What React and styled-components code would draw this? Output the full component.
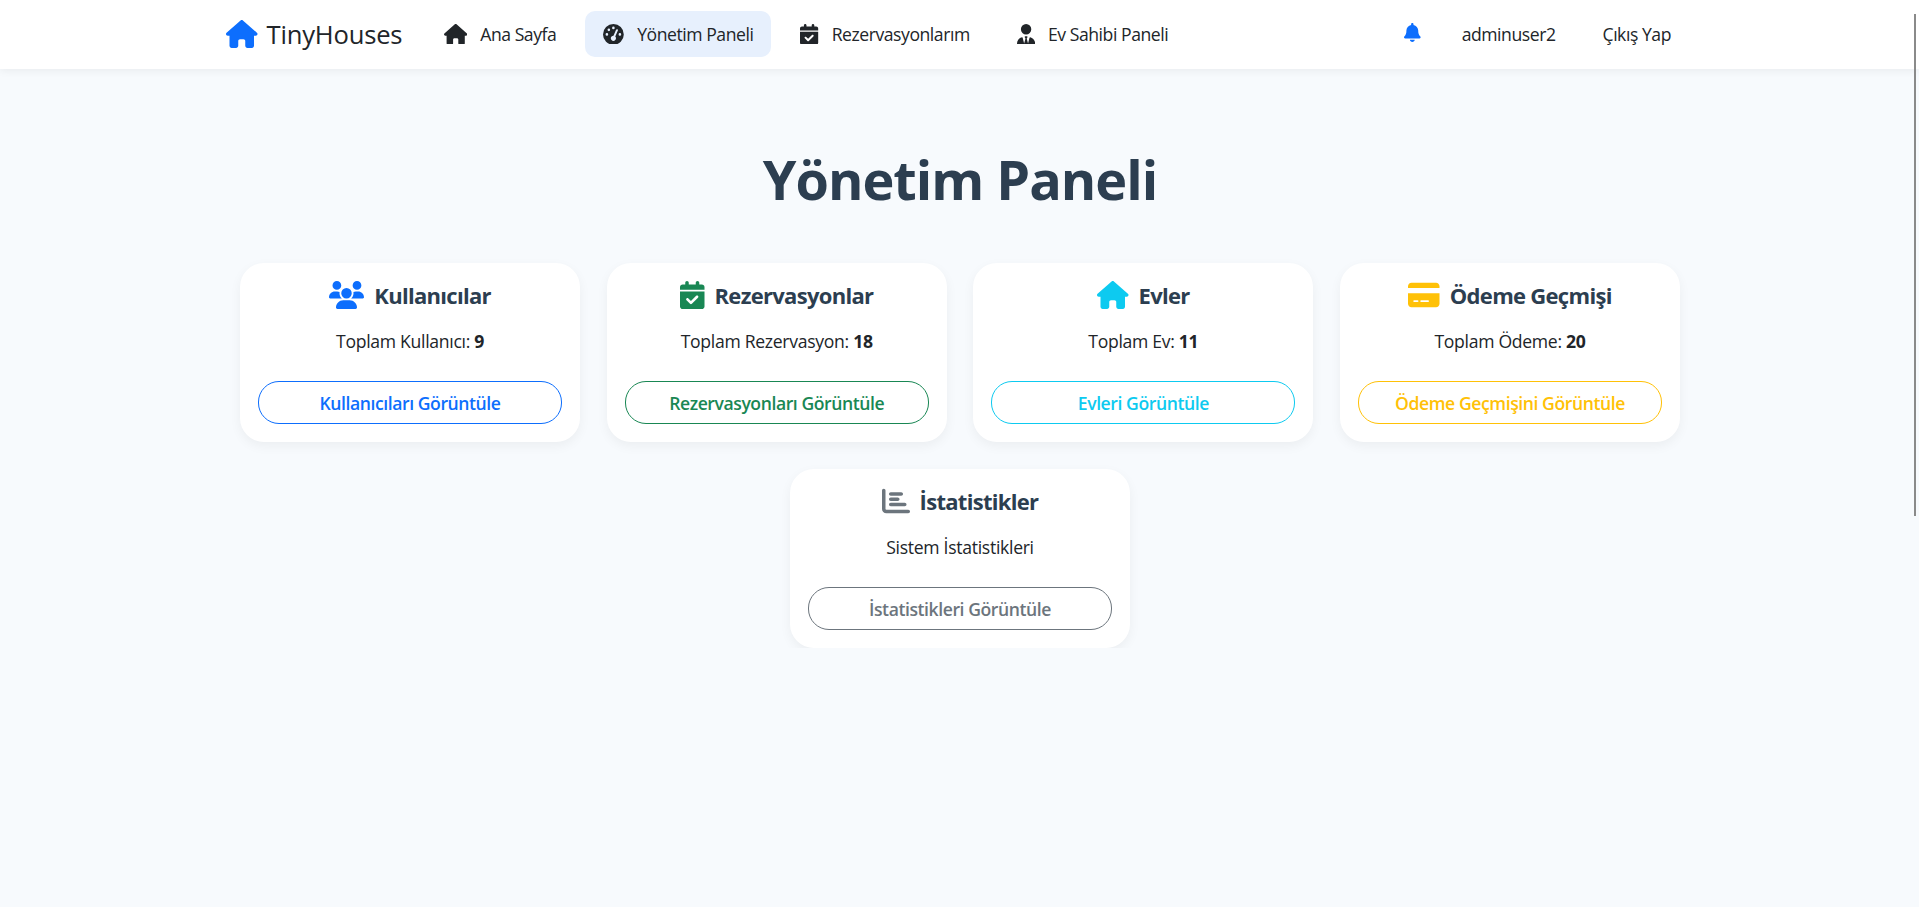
import React from 'react';
import styled, { createGlobalStyle } from 'styled-components';
import {
  FaHouse, FaGaugeHigh, FaCalendarCheck, FaUserTie, FaBell, FaUsers, FaCreditCard, FaChartBar,
} from 'react-icons/fa6';

const GlobalStyle = createGlobalStyle`
  body {
    margin: 0;
    background: #f7fafd;
    color: #212529;
    font-family: "Open Sans", "Noto Sans", sans-serif;
    font-size: 16px;
  }
`;

// the browser's overlay scrollbar seen in the screenshot
const ScrollThumb = styled.div`
  position: fixed;
  top: 14px;
  right: 3px;
  width: 2px;
  height: 502px;
  background: #8a8a8a;
`;

// react-icons forces a square box, so the real width of each glyph is set here
const Glyph = styled(({ icon: Icon, className }) => <Icon className={className} />)`
  flex: none;
  height: 1em;
  width: ${({ $ratio }) => $ratio}em;
`;

const Navbar = styled.nav`
  height: 69px;
  box-sizing: border-box;
  background: #fff;
  box-shadow: 0 2px 8px rgba(0, 0, 0, 0.06);
  display: flex;
  align-items: center;
  padding: 0 248px 1px 226px;
`;

const Brand = styled.a`
  display: flex;
  align-items: center;
  gap: 9px;
  font-size: 25.6px;
  letter-spacing: -0.2px;
  color: #212529;
  margin-right: 23.5px;
  svg { color: #0d6efd; font-size: 28px; }
`;

const NavLink = styled.a`
  display: flex;
  align-items: center;
  gap: 13px;
  height: 46px;
  padding: 0 18px;
  border-radius: 10px;
  font-size: 17.6px;
  letter-spacing: -0.45px;
  color: #212529;
  background: ${({ $active }) => ($active ? '#e7f0fd' : 'transparent')};
  margin-right: 11px;
  svg { font-size: 20.8px; }
`;

const Spacer = styled.div`
  flex: 1;
`;

const BellButton = styled.span`
  display: flex;
  color: #0d6efd;
  font-size: 19px;
  margin: 0 41px 4px 0;
`;

const UserLink = styled.a`
  font-size: 17.6px;
  letter-spacing: -0.45px;
  color: #212529;
  margin-left: ${({ $gap }) => $gap || 0}px;
`;

const Main = styled.main`
  display: flex;
  flex-direction: column;
  align-items: center;
  padding-left: 1px;
`;

const Title = styled.h1`
  margin: 78px 0 51px;
  font-size: 54px;
  line-height: 65px;
  font-weight: 700;
  letter-spacing: -1px;
  color: #2c3e50;
`;

const Cards = styled.div`
  width: 1440px;
  display: flex;
  flex-wrap: wrap;
  justify-content: center;
  gap: 27px 26.66px;
`;

const Card = styled.section`
  width: 340px;
  height: 179px;
  box-sizing: border-box;
  padding: 16px 18px 18px;
  background: #fff;
  border-radius: 24px;
  box-shadow: 0 4px 12px rgba(0, 0, 0, 0.05);
  display: flex;
  flex-direction: column;
  align-items: center;
`;

const CardTitle = styled.h2`
  margin: 0;
  display: flex;
  align-items: center;
  gap: 10px;
  height: 32px;
  font-size: 22px;
  font-weight: 700;
  letter-spacing: -0.7px;
  color: #2c3e50;
  svg { color: ${({ $color }) => $color}; font-size: 28px; }
`;

const CardText = styled.p`
  margin: 18px 0 0;
  line-height: 24px;
  font-size: 17.6px;
  letter-spacing: -0.3px;
  strong { font-weight: 700; }
`;

const ViewButton = styled.a`
  margin-top: auto;
  width: 100%;
  height: 43px;
  box-sizing: border-box;
  display: flex;
  align-items: center;
  justify-content: center;
  border: 1px solid ${({ $color }) => $color};
  border-radius: 21px;
  color: ${({ $color }) => $color};
  font-size: 17.6px;
  font-weight: 600;
  letter-spacing: -0.43px;
`;

const links = [
  { icon: FaHouse, ratio: 1.125, label: 'Ana Sayfa' },
  { icon: FaGaugeHigh, ratio: 1, label: 'Yönetim Paneli', active: true },
  { icon: FaCalendarCheck, ratio: 0.875, label: 'Rezervasyonlarım' },
  { icon: FaUserTie, ratio: 0.875, label: 'Ev Sahibi Paneli' },
];

const cards = [
  { icon: FaUsers, ratio: 1.25, title: 'Kullanıcılar', text: 'Toplam Kullanıcı: ', count: 9, button: 'Kullanıcıları Görüntüle', color: '#0d6efd' },
  { icon: FaCalendarCheck, ratio: 0.875, title: 'Rezervasyonlar', text: 'Toplam Rezervasyon: ', count: 18, button: 'Rezervasyonları Görüntüle', color: '#198754' },
  { icon: FaHouse, ratio: 1.125, title: 'Evler', text: 'Toplam Ev: ', count: 11, button: 'Evleri Görüntüle', color: '#0dcaf0' },
  { icon: FaCreditCard, ratio: 1.125, title: 'Ödeme Geçmişi', text: 'Toplam Ödeme: ', count: 20, button: 'Ödeme Geçmişini Görüntüle', color: '#ffc107' },
  { icon: FaChartBar, ratio: 1, title: 'İstatistikler', text: 'Sistem İstatistikleri', button: 'İstatistikleri Görüntüle', color: '#6c757d' },
];

export default function App() {
  return (
    <>
      <GlobalStyle />
      <Navbar>
        <Brand><Glyph icon={FaHouse} $ratio={1.125} />TinyHouses</Brand>
        {links.map(({ icon, ratio, label, active }) => (
          <NavLink key={label} $active={active}><Glyph icon={icon} $ratio={ratio} />{label}</NavLink>
        ))}
        <Spacer />
        <BellButton><Glyph icon={FaBell} $ratio={0.875} /></BellButton>
        <UserLink>adminuser2</UserLink>
        <UserLink $gap={47}>Çıkış Yap</UserLink>
      </Navbar>
      <Main>
        <Title>Yönetim Paneli</Title>
        <Cards>
          {cards.map(({ icon, ratio, title, text, count, button, color }) => (
            <Card key={title}>
              <CardTitle $color={color}><Glyph icon={icon} $ratio={ratio} />{title}</CardTitle>
              <CardText>{text}{count !== undefined && <strong>{count}</strong>}</CardText>
              <ViewButton $color={color}>{button}</ViewButton>
            </Card>
          ))}
        </Cards>
      </Main>
      <ScrollThumb />
    </>
  );
}
